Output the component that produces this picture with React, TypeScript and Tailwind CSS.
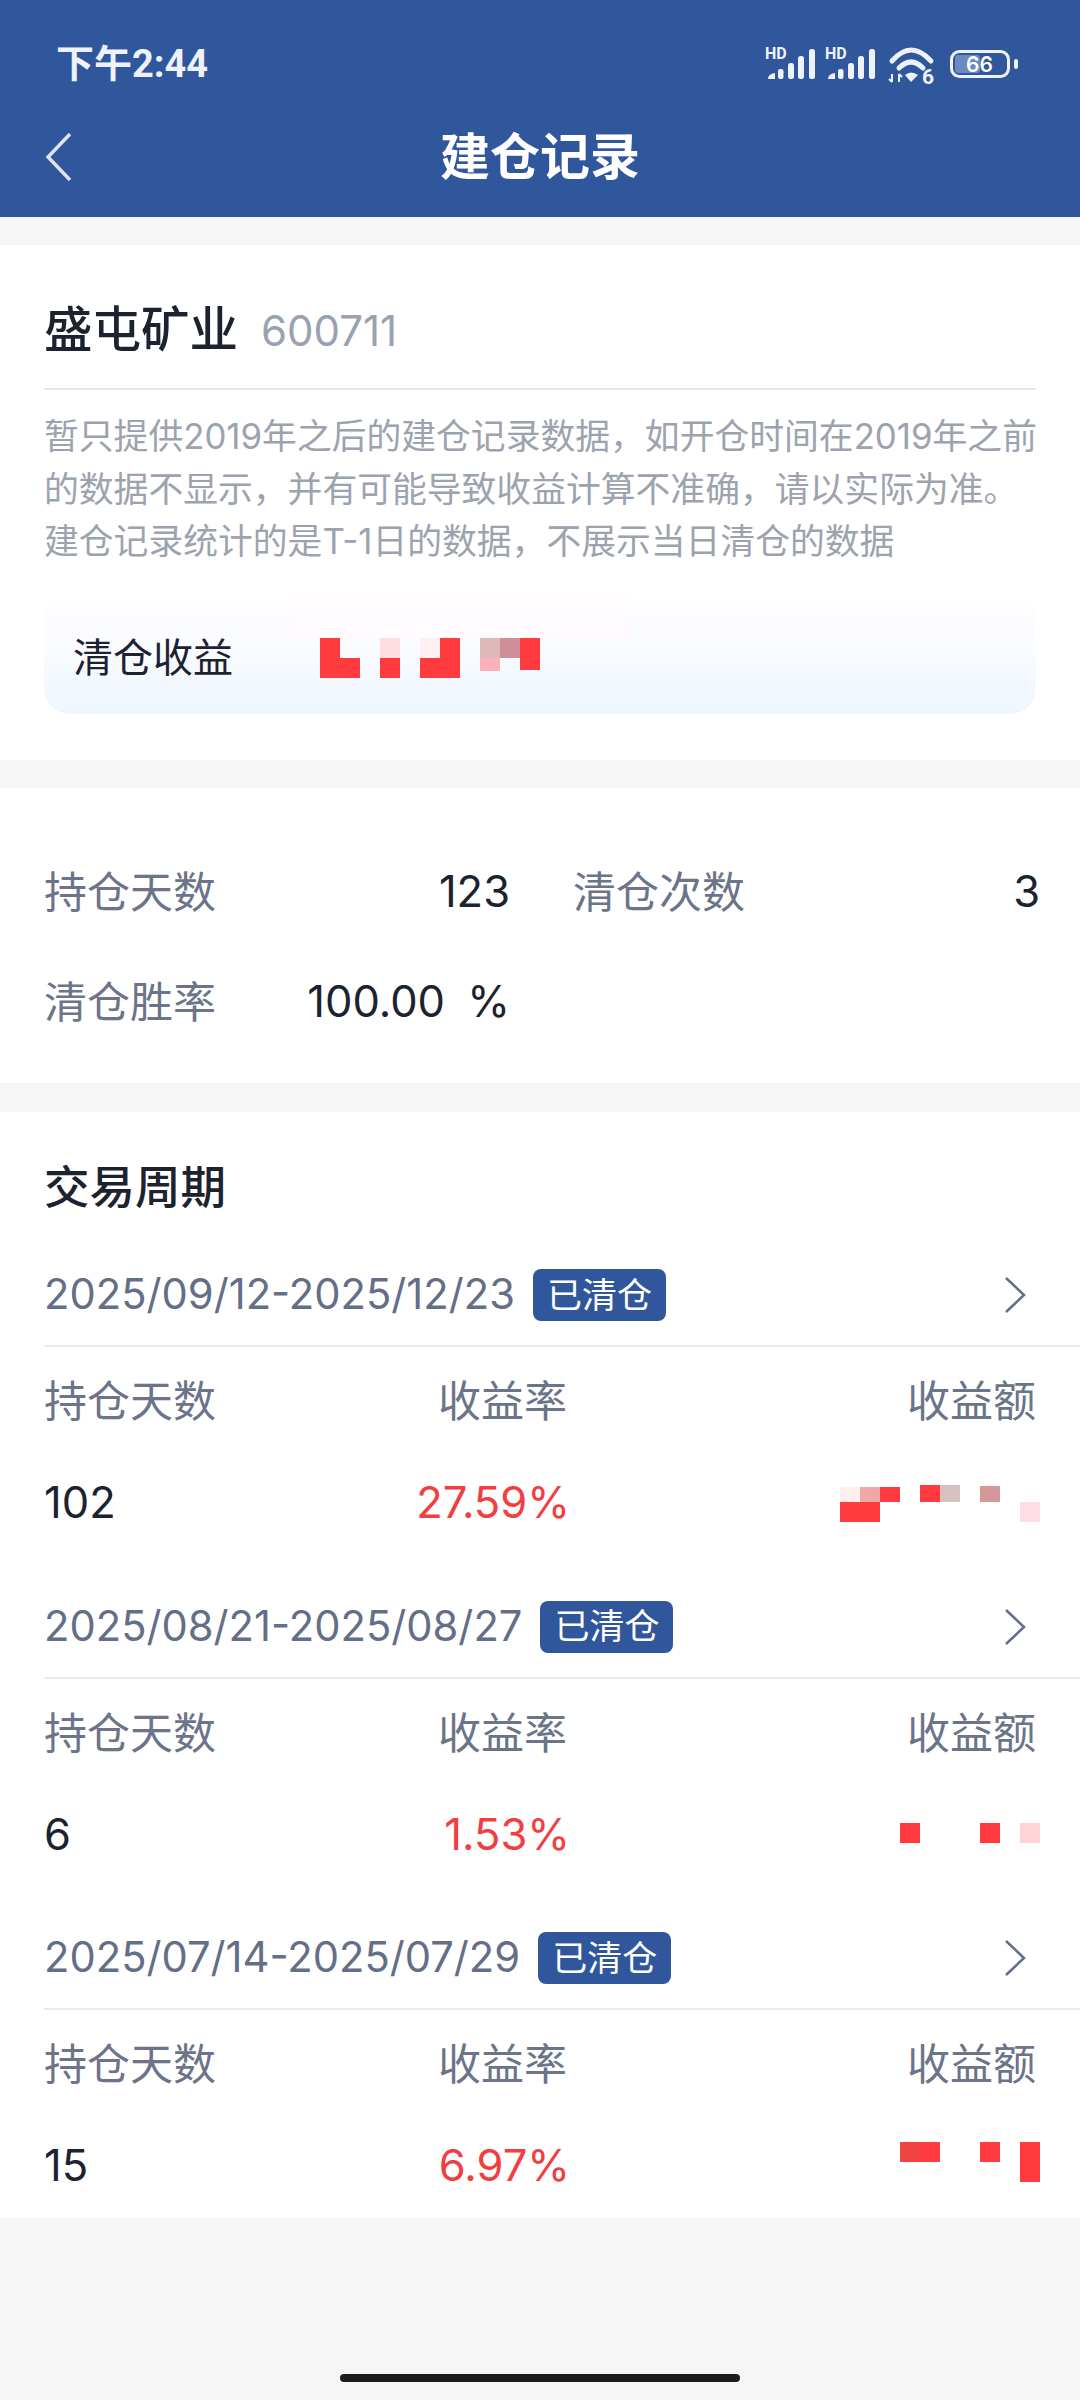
const FONT = 'font-["Inter","Noto_Sans_CJK_SC",sans-serif]';
const RED = "#ff3b3f";

type Cell = [number, number, number, number, string];

const PERIODS: {
  range: string;
  days: string;
  rate: string;
  cells: Cell[];
}[] = [
  {
    range: "2025/09/12-2025/12/23",
    days: "102",
    rate: "27.59%",
    cells: [
      [0, 2, 20, 15, "#fff0f0"],
      [20, 2, 20, 15, "#f0a8a8"],
      [40, 2, 20, 15, RED],
      [0, 17, 40, 20, RED],
      [80, 0, 20, 17, RED],
      [100, 0, 20, 17, "#d6c0c0"],
      [140, 1, 20, 16, "#d49898"],
      [180, 17, 20, 20, "#ffdde6"],
    ],
  },
  {
    range: "2025/08/21-2025/08/27",
    days: "6",
    rate: "1.53%",
    cells: [
      [60, 6, 20, 20, RED],
      [140, 6, 20, 20, RED],
      [180, 6, 20, 20, "#ffd4d8"],
    ],
  },
  {
    range: "2025/07/14-2025/07/29",
    days: "15",
    rate: "6.97%",
    cells: [
      [60, -6, 20, 20, "#ef4444"],
      [80, -6, 20, 20, RED],
      [140, -6, 20, 20, RED],
      [180, -6, 20, 40, RED],
    ],
  },
];

const TOTAL_CELLS: Cell[] = [
  [0, 0, 340, 40, "#fffbfe"],
  [30, 40, 20, 40, RED],
  [50, 60, 20, 20, RED],
  [90, 40, 20, 20, "#ffdfe2"],
  [90, 60, 20, 20, RED],
  [130, 40, 20, 20, "#fff0f4"],
  [150, 40, 20, 20, RED],
  [130, 60, 40, 20, RED],
  [190, 40, 20, 20, "#dfb8bc"],
  [210, 40, 20, 20, "#d08e98"],
  [230, 40, 20, 32, RED],
  [190, 60, 20, 13, "#ffb0b8"],
];

function StatusIcons() {
  return (
    <svg width="255" height="50" viewBox="0 0 255 50" className="shrink-0">
      {[0, 60].map((x) => (
        <g key={x} fill="#eef2fb">
          <text x={x} y="20" fontSize="16" fontWeight="700" fontFamily="Roboto, sans-serif">
            HD
          </text>
          <path d={`M${x + 3} 40 q0 -5 7 -6 v6 z`} />
          <rect x={x + 13} y="30" width="5.5" height="10" rx="2" />
          <rect x={x + 23} y="24" width="6" height="16" rx="2.5" />
          <rect x={x + 33} y="17" width="6" height="23" rx="2.5" />
          <rect x={x + 44} y="10" width="6" height="30" rx="2.5" />
        </g>
      ))}
      <g fill="none" stroke="#eef2fb" strokeWidth="5" strokeLinecap="round">
        <path d="M127 22 Q146 0 166 22" />
        <path d="M134 29 Q146 17 158 29" />
      </g>
      <path d="M140 36 Q146 31 153 36 L146 43 Z" fill="#eef2fb" />
      <path d="M127 35v8m-3-3l3 3M134 43v-8m3 3l-3-3" stroke="#eef2fb" strokeWidth="2" fill="none" />
      <text x="157" y="45" fontSize="21" fontWeight="700" fill="#eef2fb" fontFamily="Roboto, sans-serif">
        6
      </text>
      <rect x="186.5" y="12.5" width="57" height="25" rx="8" fill="none" stroke="#eef2fb" strokeWidth="3" />
      <rect x="190" y="16" width="25" height="18" rx="3" fill="#6b8ac4" />
      <text x="214.5" y="33" textAnchor="middle" fontSize="21" fontWeight="600" fill="#fff" fontFamily="Inter, sans-serif">
        66
      </text>
      <rect x="249" y="20" width="4" height="10" rx="2" fill="#eef2fb" />
    </svg>
  );
}

function Mosaic({ cells, width, height }: { cells: Cell[]; width: number; height: number }) {
  return (
    <svg width={width} height={height} viewBox={`0 0 ${width} ${height}`} className="overflow-visible">
      {cells.map(([x, y, w, h, fill], i) => (
        <rect key={i} x={x} y={y} width={w} height={h} fill={fill} />
      ))}
    </svg>
  );
}

function Period({ range, days, rate, cells }: (typeof PERIODS)[number]) {
  return (
    <div className="mt-[26px] h-[305.5px]">
      <div className="ml-11 flex h-[102px] items-center border-b-2 border-[#e9eaec] pr-[54px]">
        <span className="text-[41.7px] leading-none text-[#646f87]">{range}</span>
        <span className="ml-[18px] flex h-[52px] w-[133px] items-center justify-center rounded-lg bg-[#30569c] text-[35px] text-white">
          已清仓
        </span>
        <svg width="22" height="36" viewBox="0 0 22 36" className="ml-auto" fill="none" stroke="#646f87" strokeWidth="2.5">
          <path d="M2 1l18 17L2 35" />
        </svg>
      </div>
      <div className="mt-[22px] grid h-[60px] grid-cols-[300px_223px_1fr] items-center px-11 text-[43px] text-[#6b7488]">
        <span>持仓天数</span>
        <span className="text-right">收益率</span>
        <span className="text-right">收益额</span>
      </div>
      <div className="mt-[41px] grid h-[60px] grid-cols-[300px_223px_1fr] items-center px-11 text-[43.5px]">
        <span className="text-[#1c2230]">{days}</span>
        <span className="-mr-[3px] text-right text-[#f23d41]">{rate}</span>
        <div className="-mr-1 mt-[5px] flex justify-end">
          <Mosaic cells={cells} width={200} height={40} />
        </div>
      </div>
    </div>
  );
}

function Stat({ label, value }: { label: string; value: string }) {
  return (
    <div className="flex h-16 items-center justify-between">
      <span className="text-[43px] text-[#6b7488]">{label}</span>
      <span className="-mr-[2px] text-[43.5px] [word-spacing:10px] text-[#1c2230]">{value}</span>
    </div>
  );
}

export default function App() {
  return (
    <div className={`${FONT} relative flex h-[2400px] w-[1080px] flex-col bg-[#f6f6f6]`}>
      <header className="h-[217px] bg-[#30569c]">
        <div className="flex h-[126px] items-center justify-between pt-[2px] pr-[60px] pl-[56px]">
          <span className='font-["Roboto","Noto_Sans_CJK_SC",sans-serif] text-[38px] font-bold text-[#eef2fb]'>下午2:44</span>
          <StatusIcons />
        </div>
        <div className="relative flex h-[60px] items-center justify-center pt-[2px]">
          <svg width="28" height="48" viewBox="0 0 28 48" className="absolute left-[45px]" fill="none" stroke="#dde3ef" strokeWidth="3.5">
            <path d="M25 1L3 24l22 23" />
          </svg>
          <span className="text-[50px] font-bold text-white">建仓记录</span>
        </div>
      </header>

      <section className="mt-7 h-[515px] bg-white px-11">
        <div className="flex h-[145px] items-center border-b-2 border-[#e5e7eb] pt-[27px]">
          <span className="text-[48.5px] font-medium text-[#1c2230]">盛屯矿业</span>
          <span className="ml-[23px] text-[42px] text-[#9aa1b0]">600711</span>
        </div>
        <p className="mt-[20px] text-[34.8px] leading-[52.5px] whitespace-nowrap text-[#9ca3af]">
          暂只提供2019年之后的建仓记录数据，如开仓时间在2019年之前
          <br />
          的数据不显示，并有可能导致收益计算不准确，请以实际为准。
          <br />
          建仓记录统计的是T-1日的数据，不展示当日清仓的数据
        </p>
        <div className="mt-[30px] flex h-[116px] rounded-b-[26px] rounded-t-[20px] bg-gradient-to-b from-[#fffdff] via-[#f8fbff] to-[#eef6ff] pl-[29px]">
          <span className="self-center pt-[5px] text-[40px] text-[#1c2230]">清仓收益</span>
          <div className="ml-[57px] h-20 w-[340px]">
            <Mosaic cells={TOTAL_CELLS} width={340} height={80} />
          </div>
        </div>
      </section>

      <section className="mt-7 grid h-[295px] grid-cols-[464px_465px] content-start gap-x-[65px] gap-y-[46px] bg-white px-11 pt-[72px]">
        <Stat label="持仓天数" value="123" />
        <Stat label="清仓次数" value="3" />
        <Stat label="清仓胜率" value="100.00 %" />
      </section>

      <section className="mt-[29px] h-[1106px] bg-white pt-[44px]">
        <h2 className="-mb-px px-11 text-[45.5px] leading-[64px] font-medium text-[#1c2230]">交易周期</h2>
        {PERIODS.map((p) => (
          <Period key={p.range} {...p} />
        ))}
      </section>

      <div className="absolute bottom-[18px] left-[340px] h-2 w-[400px] rounded-full bg-[#1c1c1e]" />
    </div>
  );
}
